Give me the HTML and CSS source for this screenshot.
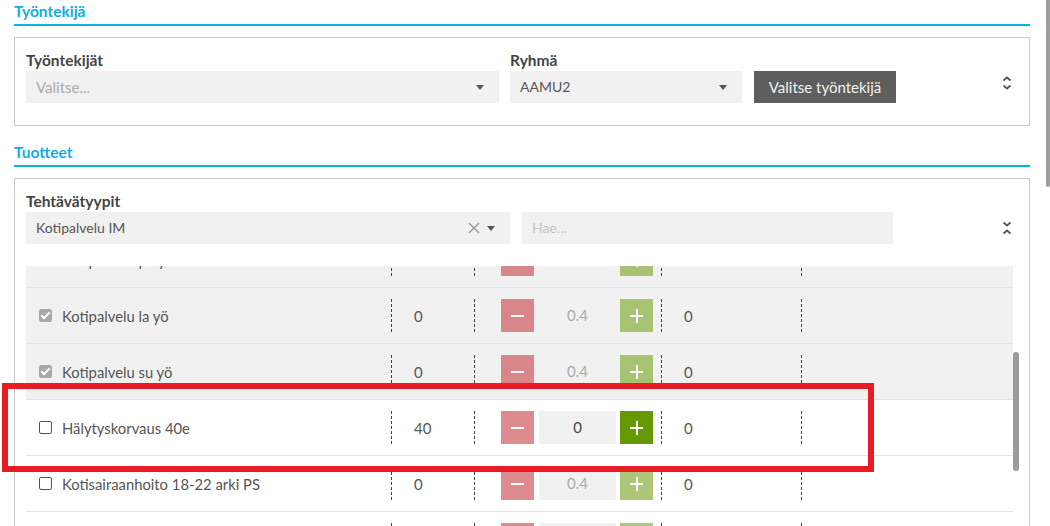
FILE: index.html
```html
<!DOCTYPE html>
<html lang="fi">
<head>
  <meta charset="UTF-8" />
  <meta name="viewport" content="width=device-width, initial-scale=1.0"/>
  <title>Työntekijä ja tuotteet</title>
  <link rel="stylesheet" href="styles.css">
</head>
<body>

  <div class="page">
    <section class="section">
      <h2 class="section-title">Työntekijä</h2>
      <div class="panel panel-employee">
        <div class="field field-employees">
          <label>Työntekijät</label>
          <div class="select is-empty">Valitse...<span class="caret"></span></div>
        </div>
        <div class="field field-group">
          <label>Ryhmä</label>
          <div class="select">AAMU2<span class="caret"></span></div>
        </div>
        <button class="btn-dark">Valitse työntekijä</button>
        <span class="toggle toggle-expand">
          <svg width="10" height="14" viewBox="0 0 10 14"><path d="M1.5 4.5 L5 1.5 L8.5 4.5 M1.5 9.5 L5 12.5 L8.5 9.5" fill="none" stroke="#555" stroke-width="1.8"/></svg>
        </span>
      </div>
    </section>

    <section class="section">
      <h2 class="section-title">Tuotteet</h2>
      <div class="panel panel-products">
        <div class="products-head">
          <div class="field field-types">
            <label>Tehtävätyypit</label>
            <div class="select">Kotipalvelu IM
              <span class="clear">
                <svg width="12" height="12" viewBox="0 0 12 12"><path d="M1 1 L11 11 M11 1 L1 11" stroke="#999" stroke-width="1.4"/></svg>
              </span>
              <span class="caret"></span>
            </div>
          </div>
          <div class="search">Hae...</div>
          <span class="toggle toggle-collapse">
            <svg width="10" height="14" viewBox="0 0 10 14"><path d="M1.5 1.5 L5 4.5 L8.5 1.5 M1.5 12.5 L5 9.5 L8.5 12.5" fill="none" stroke="#555" stroke-width="1.8"/></svg>
          </span>
        </div>

        <div class="product-list">
          <div class="rows">
            <div class="row is-selected">
              <div class="cell-name"><span class="check checked"></span>Kotipalvelu pe yö</div>
              <div class="cell-value">0</div>
              <div class="cell-qty"><span class="btn-minus off"></span><span class="qty muted">0.4</span><span class="btn-plus off"></span></div>
              <div class="cell-total">0</div>
              <div class="cell-end"></div>
            </div>
            <div class="row is-selected">
              <div class="cell-name"><span class="check checked"></span>Kotipalvelu la yö</div>
              <div class="cell-value">0</div>
              <div class="cell-qty"><span class="btn-minus off"></span><span class="qty muted">0.4</span><span class="btn-plus off"></span></div>
              <div class="cell-total">0</div>
              <div class="cell-end"></div>
            </div>
            <div class="row is-selected">
              <div class="cell-name"><span class="check checked"></span>Kotipalvelu su yö</div>
              <div class="cell-value">0</div>
              <div class="cell-qty"><span class="btn-minus off"></span><span class="qty muted">0.4</span><span class="btn-plus off"></span></div>
              <div class="cell-total">0</div>
              <div class="cell-end"></div>
            </div>
            <div class="row">
              <div class="cell-name"><span class="check"></span>Hälytyskorvaus 40e</div>
              <div class="cell-value">40</div>
              <div class="cell-qty"><span class="btn-minus off"></span><span class="qty">0</span><span class="btn-plus"></span></div>
              <div class="cell-total">0</div>
              <div class="cell-end"></div>
            </div>
            <div class="row">
              <div class="cell-name"><span class="check"></span>Kotisairaanhoito 18-22 arki PS</div>
              <div class="cell-value">0</div>
              <div class="cell-qty"><span class="btn-minus off"></span><span class="qty muted">0.4</span><span class="btn-plus off"></span></div>
              <div class="cell-total">0</div>
              <div class="cell-end"></div>
            </div>
            <div class="row">
              <div class="cell-name"><span class="check"></span>Kotisairaanhoito 22-07 arki PS</div>
              <div class="cell-value">0</div>
              <div class="cell-qty"><span class="btn-minus off"></span><span class="qty muted">0.4</span><span class="btn-plus off"></span></div>
              <div class="cell-total">0</div>
              <div class="cell-end"></div>
            </div>
          </div>
          <div class="list-thumb"></div>
        </div>
      </div>
    </section>

    <div class="highlight"></div>
    <div class="page-thumb"></div>
  </div>

</body>
</html>
```

FILE: styles.css
```css
body {
  margin: 0;
  font-family: Lato, "Open Sans", sans-serif;
  font-size: 14px;
  color: #555;
  background: #fff;
  overflow: hidden;
}

.page {
  position: relative;
  width: 1016px;
  padding: 0 20px 0 14px;
  height: 526px;
}

.section + .section {
  margin-top: 15px;
}

.section-title {
  margin: 0;
  font-size: 15.5px;
  font-weight: bold;
  line-height: 22px;
  color: #12ace6;
  padding-bottom: 2px;
  border-bottom: 2px solid #0ab0ea;
}

.panel {
  margin-top: 11px;
  border: 1px solid #cacaca;
}

.panel-employee {
  display: flex;
  align-items: flex-end;
  padding: 12px 10px 22px 11px;
}

.field label {
  display: block;
  font-size: 15.5px;
  font-weight: bold;
  color: #444;
  line-height: 20px;
  margin-bottom: 1px;
}

.select {
  position: relative;
  height: 32px;
  line-height: 32px;
  background: #f1f1f1;
  padding-left: 10px;
  color: #555;
}

.select.is-empty {
  color: #aaa;
  font-size: 15px;
}

.caret {
  position: absolute;
  right: 15px;
  top: 14px;
  border-top: 5px solid #555;
  border-left: 4px solid transparent;
  border-right: 4px solid transparent;
}

.clear {
  position: absolute;
  right: 30px;
  top: 10px;
  line-height: 0;
}

.field-employees {
  width: 473px;
}

.field-group {
  width: 232px;
  margin-left: 11px;
}

.btn-dark {
  height: 32px;
  width: 142px;
  margin-left: 12px;
  border: none;
  background: #5e5e5e;
  color: #f2f2f2;
  font-family: inherit;
  font-size: 15px;
  padding: 0;
}

.toggle {
  margin-left: auto;
  margin-right: 7px;
  line-height: 0;
}

.toggle-expand {
  margin-bottom: 13px;
}

.panel-products {
  padding: 12px 10px 0 11px;
  height: 400px;
}

.products-head {
  display: flex;
  align-items: flex-end;
}

.field-types {
  width: 484px;
}

.search {
  width: 361px;
  height: 32px;
  line-height: 32px;
  margin-left: 12px;
  padding-left: 10px;
  background: #f1f1f1;
  color: #c4c4c4;
}

.toggle-collapse {
  margin-bottom: 9px;
}

.product-list {
  position: relative;
  margin-top: 22px;
  height: 260px;
  overflow: hidden;
}

.rows {
  margin-top: -34px;
  margin-right: 6px;
}

.row {
  display: grid;
  grid-template-columns: 365px 83px 187px 140px 1fr;
  align-items: center;
  height: 55px;
  border-bottom: 1px solid #e3e3e3;
  background: #fff;
}

.row.is-selected {
  background: #f1f1f1;
}

.cell-name {
  display: flex;
  align-items: center;
  padding-left: 13px;
  font-size: 14.8px;
  color: #555;
}

.check {
  width: 13px;
  height: 13px;
  box-sizing: border-box;
  border: 1.5px solid #555;
  border-radius: 2px;
  background: #fff;
  margin-right: 10px;
  position: relative;
}

.check.checked {
  border-color: #a9a9a9;
  background: #a9a9a9;
}

.check.checked::after {
  content: "";
  position: absolute;
  left: 3px;
  top: 0px;
  width: 3px;
  height: 7px;
  border: solid #fff;
  border-width: 0 2px 2px 0;
  transform: rotate(45deg);
}

.cell-value,
.cell-qty,
.cell-total,
.cell-end {
  height: 33px;
  border-left: 1px dashed #444;
  display: flex;
  align-items: center;
}

.cell-value,
.cell-total {
  padding-left: 22px;
  font-size: 15px;
  color: #555;
}

.cell-qty {
  padding-left: 26px;
}

.btn-minus,
.btn-plus {
  position: relative;
  width: 33px;
  height: 33px;
  flex: none;
}

.btn-minus {
  background: #cc4951;
}

.btn-plus {
  background: #669900;
}

.btn-minus.off,
.btn-plus.off {
  opacity: 0.64;
}

.btn-plus.off {
  background: #7ca82c;
}

.btn-minus::before,
.btn-plus::before,
.btn-plus::after {
  content: "";
  position: absolute;
  background: #fff;
  left: 10px;
  top: 16px;
  width: 13px;
  height: 2px;
}

.btn-plus::after {
  left: 16px;
  top: 10px;
  width: 2px;
  height: 14px;
}

.qty {
  width: 77px;
  height: 33px;
  line-height: 33px;
  margin: 0 4px 0 5px;
  background: #f1f1f1;
  text-align: center;
  font-size: 15px;
  color: #444;
}

.qty.muted {
  color: #aaa;
}

.list-thumb {
  position: absolute;
  right: 0;
  top: 86px;
  width: 6px;
  height: 119px;
  border-radius: 3px;
  background: #9b9b9b;
}

.highlight {
  position: absolute;
  left: 2px;
  top: 383px;
  width: 872px;
  height: 89px;
  box-sizing: border-box;
  border: 6px solid #e81c22;
}

.page-thumb {
  position: absolute;
  right: 0;
  top: 0;
  width: 4px;
  height: 187px;
  border-radius: 0 0 2px 2px;
  background: #9d9d9d;
}
```
